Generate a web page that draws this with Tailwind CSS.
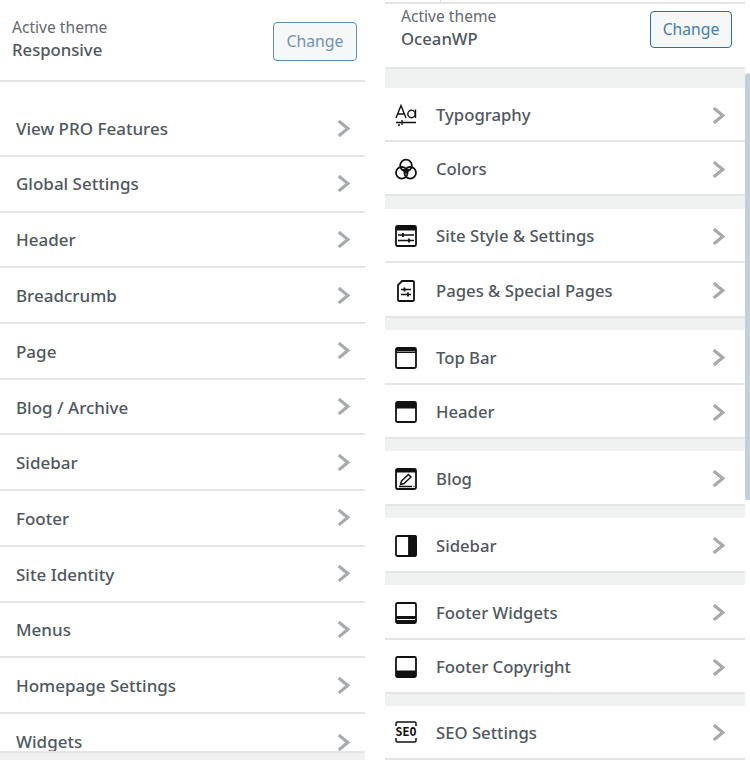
<!DOCTYPE html>
<html>
<head>
<meta charset="utf-8">
<script src="https://cdn.jsdelivr.net/npm/@tailwindcss/browser@4"></script>
</head>
<body class="bg-white font-['Noto_Sans',sans-serif] text-[#50575e] overflow-hidden">
<svg width="0" height="0" class="absolute">
  <symbol id="chev" viewBox="0 0 12 16"><path d="M1.5 1 L10 8 L1.5 15" fill="none" stroke="#a7aaad" stroke-width="3"/></symbol>
</svg>
<div class="flex w-[750px] h-[760px] overflow-hidden">
  <!-- left panel -->
  <div class="w-[365px] h-[760px] flex flex-col overflow-hidden shrink-0">
    <div class="h-[82px] shrink-0 border-b-2 border-[#e4e5e6] flex items-start justify-between pl-[12px] pr-[8px] pt-[16px]">
      <div class="flex flex-col">
        <span class="text-[15.6px] leading-[22px] text-[#646970]">Active theme</span>
        <span class="text-[16.7px] leading-[24px] font-medium">Responsive</span>
      </div>
      <button class="w-[84px] h-[39px] mt-[6px] rounded-[4px] border border-[#5b8db5] bg-[#f6f7f7] text-[15.8px] text-[#6c94b8]">Change</button>
    </div>
    <div class="h-[75px] shrink-0 border-b-2 border-[#e4e5e6] flex items-center justify-between pl-[16px] pr-[15px] pt-[20px] text-[17px] font-medium"><span>View PRO Features</span><svg class="w-[13px] h-[17px]"><use href="#chev"/></svg></div>
    <div class="h-[55.7px] shrink-0 border-b-2 border-[#e4e5e6] flex items-center justify-between pl-[16px] pr-[15px] text-[17px] font-medium"><span>Global Settings</span><svg class="w-[13px] h-[17px]"><use href="#chev"/></svg></div>
    <div class="h-[55.7px] shrink-0 border-b-2 border-[#e4e5e6] flex items-center justify-between pl-[16px] pr-[15px] text-[17px] font-medium"><span class="pt-[1px]">Header</span><svg class="w-[13px] h-[17px]"><use href="#chev"/></svg></div>
    <div class="h-[55.7px] shrink-0 border-b-2 border-[#e4e5e6] flex items-center justify-between pl-[16px] pr-[15px] text-[17px] font-medium"><span class="pt-[2px]">Breadcrumb</span><svg class="w-[13px] h-[17px]"><use href="#chev"/></svg></div>
    <div class="h-[55.7px] shrink-0 border-b-2 border-[#e4e5e6] flex items-center justify-between pl-[16px] pr-[15px] text-[17px] font-medium"><span class="pt-[1px]">Page</span><svg class="w-[13px] h-[17px]"><use href="#chev"/></svg></div>
    <div class="h-[55.7px] shrink-0 border-b-2 border-[#e4e5e6] flex items-center justify-between pl-[16px] pr-[15px] text-[17px] font-medium"><span class="pt-[2px]">Blog / Archive</span><svg class="w-[13px] h-[17px]"><use href="#chev"/></svg></div>
    <div class="h-[55.7px] shrink-0 border-b-2 border-[#e4e5e6] flex items-center justify-between pl-[16px] pr-[15px] text-[17px] font-medium"><span class="pt-[1px]">Sidebar</span><svg class="w-[13px] h-[17px]"><use href="#chev"/></svg></div>
    <div class="h-[55.7px] shrink-0 border-b-2 border-[#e4e5e6] flex items-center justify-between pl-[16px] pr-[15px] text-[17px] font-medium"><span class="pt-[1px]">Footer</span><svg class="w-[13px] h-[17px]"><use href="#chev"/></svg></div>
    <div class="h-[55.7px] shrink-0 border-b-2 border-[#e4e5e6] flex items-center justify-between pl-[16px] pr-[15px] text-[17px] font-medium"><span class="pt-[2px]">Site Identity</span><svg class="w-[13px] h-[17px]"><use href="#chev"/></svg></div>
    <div class="h-[55.7px] shrink-0 border-b-2 border-[#e4e5e6] flex items-center justify-between pl-[16px] pr-[15px] text-[17px] font-medium"><span class="pt-[1px]">Menus</span><svg class="w-[13px] h-[17px]"><use href="#chev"/></svg></div>
    <div class="h-[55.7px] shrink-0 border-b-2 border-[#e4e5e6] flex items-center justify-between pl-[16px] pr-[15px] text-[17px] font-medium"><span class="pt-[2px]">Homepage Settings</span><svg class="w-[13px] h-[17px]"><use href="#chev"/></svg></div>
    <div class="h-[39px] shrink-0 border-b-2 border-[#e4e5e6] flex items-start justify-between pl-[16px] pr-[15px] pt-[16px] text-[17px] leading-[24px] font-medium overflow-hidden"><span>Widgets</span><svg class="w-[13px] h-[17px] mt-[4px] shrink-0"><use href="#chev"/></svg></div>
    <div class="flex-1 bg-[#f0f0f1]"></div>
  </div>

  <div class="w-[20px] shrink-0 bg-white"></div>

  <!-- right panel -->
  <div class="w-[360px] h-[760px] flex flex-col overflow-hidden shrink-0 bg-[#f0f1f1]">
    <div class="h-[4px] shrink-0 bg-white border-b-2 border-[#e4e5e6] flex"><div class="w-[56px] border-r border-[#dcdcde]"></div></div>
    <div class="h-[65px] shrink-0 bg-white border-b-2 border-[#e4e5e6] flex items-start justify-between pl-[16px] pr-[13px]">
      <div class="flex flex-col pt-[1px]">
        <span class="text-[15.6px] leading-[22px] text-[#646970]">Active theme</span>
        <span class="text-[16.7px] leading-[24px] font-medium">OceanWP</span>
      </div>
      <button class="w-[82px] h-[37px] mt-[7px] rounded-[4px] border border-[#2271b1] bg-[#f6f7f7] text-[15.7px] text-[#3f7eae]">Change</button>
    </div>

    <div class="mt-[19px] h-[54px] shrink-0 bg-white border-b-2 border-[#e4e5e6] flex items-center pl-[10px] pr-[20px] pt-[2px] text-[16.7px] font-medium">
      <svg class="w-[22px] h-[22px] mr-[19px] shrink-0" viewBox="0 0 22 22" fill="none" stroke="#111" stroke-width="1.4"><path d="M1 14 L6 1.5 L11 14 M3 10 H9"/><circle cx="16.5" cy="10" r="3.7"/><path d="M20.5 5.5 V14"/><path d="M1 18.5 H21 M7 16 V21 M5 21 H3" stroke-width="1.3"/></svg>
      <span class="flex-1">Typography</span><svg class="w-[13px] h-[17px]"><use href="#chev"/></svg>
    </div>
    <div class="h-[54px] shrink-0 bg-white border-b-2 border-[#e4e5e6] flex items-center pl-[10px] pr-[20px] pt-[2px] text-[16.7px] font-medium">
      <svg class="w-[22px] h-[22px] mr-[19px] shrink-0" viewBox="0 0 22 22" fill="none" stroke="#111" stroke-width="1.8"><circle cx="11" cy="7.5" r="5.8"/><circle cx="6.8" cy="14.8" r="5.8"/><circle cx="15.2" cy="14.8" r="5.8"/><path d="M7.5 11 L14.5 11 L11 16.5 Z" fill="#111" stroke="none"/></svg>
      <span class="flex-1">Colors</span><svg class="w-[13px] h-[17px]"><use href="#chev"/></svg>
    </div>

    <div class="mt-[13px] h-[54px] shrink-0 bg-white border-b-2 border-[#e4e5e6] flex items-center pl-[10px] pr-[20px] pt-[2px] text-[16.7px] font-medium">
      <svg class="w-[22px] h-[22px] mr-[19px] shrink-0" viewBox="0 0 22 22" fill="none" stroke="#111" stroke-width="1.8"><rect x="1" y="1" width="20" height="20" rx="1.5"/><path d="M1 3.5 H21" stroke-width="4"/><path d="M3 10 H19 M3 15.5 H19" stroke-width="1.3"/><path d="M8 8 V12 M14 13.5 V17.5" stroke-width="1.8"/></svg>
      <span class="flex-1">Site Style &amp; Settings</span><svg class="w-[13px] h-[17px]"><use href="#chev"/></svg>
    </div>
    <div class="h-[55px] shrink-0 bg-white border-b-2 border-[#e4e5e6] flex items-center pl-[10px] pr-[20px] pt-[2px] text-[16.7px] font-medium">
      <svg class="w-[22px] h-[22px] mr-[19px] shrink-0" viewBox="0 0 22 22" fill="none" stroke="#111" stroke-width="1.8"><path d="M7 1 H17.5 A1.2 1.2 0 0 1 19 2.2 V19.8 A1.2 1.2 0 0 1 17.5 21 H4.5 A1.2 1.2 0 0 1 3 19.8 V5 Z"/><path d="M6 9.5 H16 M6 14.5 H16" stroke-width="1.3"/><path d="M9.5 7.5 V11.5 M13 12.5 V16.5" stroke-width="1.8"/></svg>
      <span class="flex-1">Pages &amp; Special Pages</span><svg class="w-[13px] h-[17px]"><use href="#chev"/></svg>
    </div>

    <div class="mt-[12px] h-[55px] shrink-0 bg-white border-b-2 border-[#e4e5e6] flex items-center pl-[10px] pr-[20px] pt-[2px] text-[16.7px] font-medium">
      <svg class="w-[22px] h-[22px] mr-[19px] shrink-0" viewBox="0 0 22 22" fill="none" stroke="#111" stroke-width="1.8"><rect x="1" y="1" width="20" height="20" rx="1.5"/><path d="M1 3 H21" stroke-width="3"/><path d="M1 5.5 H21" stroke-width="1"/></svg>
      <span class="flex-1">Top Bar</span><svg class="w-[13px] h-[17px]"><use href="#chev"/></svg>
    </div>
    <div class="h-[54px] shrink-0 bg-white border-b-2 border-[#e4e5e6] flex items-center pl-[10px] pr-[20px] pt-[2px] text-[16.7px] font-medium">
      <svg class="w-[22px] h-[22px] mr-[19px] shrink-0" viewBox="0 0 22 22" fill="none" stroke="#111" stroke-width="1.8"><rect x="1" y="1" width="20" height="20" rx="1.5"/><path d="M1 4.5 H21" stroke-width="6"/></svg>
      <span class="flex-1">Header</span><svg class="w-[13px] h-[17px]"><use href="#chev"/></svg>
    </div>

    <div class="mt-[12px] h-[55px] shrink-0 bg-white border-b-2 border-[#e4e5e6] flex items-center pl-[10px] pr-[20px] pt-[2px] text-[16.7px] font-medium">
      <svg class="w-[22px] h-[22px] mr-[19px] shrink-0" viewBox="0 0 22 22" fill="none" stroke="#111" stroke-width="1.8"><rect x="1" y="1" width="20" height="20" rx="1.5"/><path d="M1 3 H21" stroke-width="3"/><path d="M5.5 16.5 L6.5 13 L13.5 6.5 L16 9 L9 15.5 Z" stroke-width="1.4"/><path d="M4 18.5 H17 M18.5 18.5 H19.5" stroke-width="1.4"/></svg>
      <span class="flex-1">Blog</span><svg class="w-[13px] h-[17px]"><use href="#chev"/></svg>
    </div>

    <div class="mt-[12px] h-[55px] shrink-0 bg-white border-b-2 border-[#e4e5e6] flex items-center pl-[10px] pr-[20px] pt-[2px] text-[16.7px] font-medium">
      <svg class="w-[22px] h-[22px] mr-[19px] shrink-0" viewBox="0 0 22 22" fill="none" stroke="#111" stroke-width="1.8"><rect x="1" y="1" width="20" height="20" rx="1.5"/><path d="M14 1 H19.5 A1.5 1.5 0 0 1 21 2.5 V19.5 A1.5 1.5 0 0 1 19.5 21 H14 Z" fill="#111"/></svg>
      <span class="flex-1">Sidebar</span><svg class="w-[13px] h-[17px]"><use href="#chev"/></svg>
    </div>

    <div class="mt-[12px] h-[55px] shrink-0 bg-white border-b-2 border-[#e4e5e6] flex items-center pl-[10px] pr-[20px] pt-[2px] text-[16.7px] font-medium">
      <svg class="w-[22px] h-[22px] mr-[19px] shrink-0" viewBox="0 0 22 22" fill="none" stroke="#111" stroke-width="1.8"><rect x="1" y="1" width="20" height="20" rx="1.5"/><path d="M1 15.5 H21" stroke-width="3"/><path d="M1 19 H21" stroke-width="2"/></svg>
      <span class="flex-1">Footer Widgets</span><svg class="w-[13px] h-[17px]"><use href="#chev"/></svg>
    </div>
    <div class="h-[54px] shrink-0 bg-white border-b-2 border-[#e4e5e6] flex items-center pl-[10px] pr-[20px] pt-[2px] text-[16.7px] font-medium">
      <svg class="w-[22px] h-[22px] mr-[19px] shrink-0" viewBox="0 0 22 22" fill="none" stroke="#111" stroke-width="1.8"><rect x="1" y="1" width="20" height="20" rx="1.5"/><path d="M1 17.5 H21" stroke-width="6"/></svg>
      <span class="flex-1">Footer Copyright</span><svg class="w-[13px] h-[17px]"><use href="#chev"/></svg>
    </div>

    <div class="mt-[12px] h-[54px] shrink-0 bg-white border-b-2 border-[#e4e5e6] flex items-center pl-[10px] pr-[20px] text-[16.7px] font-medium">
      <svg class="w-[22px] h-[22px] mr-[19px] shrink-0" viewBox="0 0 22 22" fill="none" stroke="#111" stroke-width="1.5"><path d="M1 5 V2.5 A1.5 1.5 0 0 1 2.5 1 H19.5 A1.5 1.5 0 0 1 21 2.5 V5 M1 17 V19.5 A1.5 1.5 0 0 0 2.5 21 H19.5 A1.5 1.5 0 0 0 21 19.5 V17"/><text x="11" y="15.2" text-anchor="middle" textLength="21" lengthAdjust="spacingAndGlyphs" font-family="DejaVu Sans Mono, monospace" font-size="11.5" font-weight="700" fill="#111" stroke="none">SEO</text></svg>
      <span class="flex-1 pt-[2px]">SEO Settings</span><svg class="w-[13px] h-[17px]"><use href="#chev"/></svg>
    </div>
  </div>

  <!-- scrollbar gutter -->
  <div class="w-[5px] h-[760px] shrink-0 bg-white pt-[73px]">
    <div class="h-[427px] bg-[#c3cfdb] rounded-tl-[4px] rounded-bl-[2px]"></div>
  </div>
</div>
</body>
</html>
